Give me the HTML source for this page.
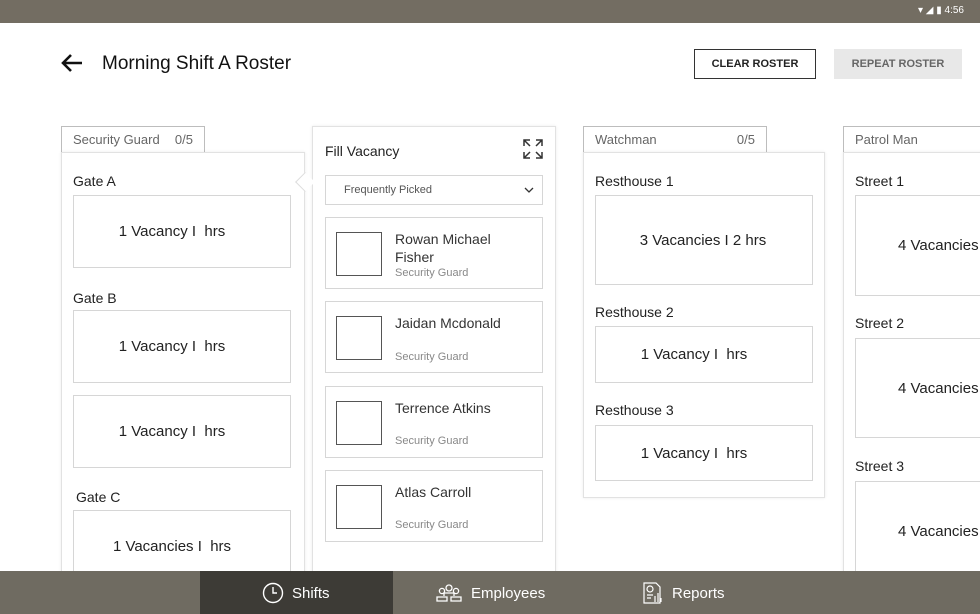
<!DOCTYPE html><html><head><style>
*{box-sizing:border-box;margin:0;padding:0}
body{width:980px;height:614px;overflow:hidden;background:#fff;font-family:"Liberation Sans",sans-serif;color:#222;position:relative}
.a{position:absolute}
.box{position:absolute;border:1px solid #d6d6d6;background:#fff;display:flex;align-items:center;justify-content:center;font-size:15px;color:#222;padding-right:20px}
.lbl{position:absolute;font-size:14px;color:#222}
.tab{position:absolute;border:1px solid #bdbdbd;border-bottom:none;background:#fff;font-size:13px;color:#666;padding:5px 11px;height:27px}
.panel{position:absolute;border:1px solid #e2e2e2;background:#fff;box-shadow:0 0 3px rgba(0,0,0,.08)}
.card{position:absolute;left:325px;width:218px;height:72px;border:1px solid #d6d6d6}
.card .av{position:absolute;left:10px;top:14px;width:46px;height:44px;border:1px solid #555}
.card .n{position:absolute;left:69px;top:12px;font-size:14px;color:#333;line-height:18px;width:115px}
.card .r{position:absolute;left:69px;font-size:11px;color:#888}
</style></head><body>
<div class="a" style="left:0;top:0;width:980px;height:23px;background:#736d62"></div>
<div class="a" style="right:16px;top:5px;font-size:10px;color:#fff">▾ ◢ ▮ 4:56</div>
<svg class="a" style="left:60px;top:53px" width="24" height="20"><path d="M22 10H3M11 2L3 10l8 8" stroke="#111" stroke-width="2.6" fill="none"/></svg>
<div class="a" style="left:102px;top:53px;font-size:19px;color:#111">Morning Shift A Roster</div>
<div class="a" style="left:694px;top:49px;width:122px;height:30px;border:1px solid #333;font-size:11px;font-weight:bold;display:flex;align-items:center;justify-content:center;color:#222">CLEAR ROSTER</div>
<div class="a" style="left:834px;top:49px;width:128px;height:30px;background:#e8e8e8;font-size:11px;font-weight:bold;display:flex;align-items:center;justify-content:center;color:#666">REPEAT ROSTER</div>

<div class="tab" style="left:61px;top:126px;width:144px">Security Guard<span style="float:right">0/5</span></div>
<div class="panel" style="left:61px;top:152px;width:244px;height:440px"></div>
<div class="lbl" style="left:73px;top:173px">Gate A</div>
<div class="box" style="left:73px;top:195px;width:218px;height:73px">1 Vacancy I &nbsp;hrs</div>
<div class="lbl" style="left:73px;top:290px">Gate B</div>
<div class="box" style="left:73px;top:310px;width:218px;height:73px">1 Vacancy I &nbsp;hrs</div>
<div class="box" style="left:73px;top:395px;width:218px;height:73px">1 Vacancy I &nbsp;hrs</div>
<div class="lbl" style="left:76px;top:489px">Gate C</div>
<div class="box" style="left:73px;top:510px;width:218px;height:73px">1 Vacancies I &nbsp;hrs</div>

<div class="panel" style="left:312px;top:126px;width:244px;height:460px"></div>
<div class="a" style="left:298px;top:175px;width:14px;height:14px;background:#fff;border-left:1px solid #ddd;border-bottom:1px solid #ddd;transform:rotate(45deg)"></div>
<div class="lbl" style="left:325px;top:143px">Fill Vacancy</div>
<svg class="a" style="left:522px;top:138px" width="22" height="22" fill="none" stroke="#333" stroke-width="1.5"><path d="M2 8V2h6M2 2l6 6M20 8V2h-6M20 2l-6 6M2 14v6h6M2 20l6-6M20 14v6h-6M20 20l-6-6"/></svg>
<div class="a" style="left:325px;top:175px;width:218px;height:30px;border:1px solid #d6d6d6;font-size:11px;color:#555;padding:8px 0 0 18px">Frequently Picked<svg style="position:absolute;right:8px;top:11px" width="10" height="7"><path d="M1 1l4 4 4-4" stroke="#333" fill="none" stroke-width="1.3"/></svg></div>
<div class="card" style="top:217px"><div class="av"></div><div class="n">Rowan Michael Fisher</div><div class="r" style="top:49px">Security Guard</div></div>
<div class="card" style="top:301px"><div class="av"></div><div class="n">Jaidan Mcdonald</div><div class="r" style="top:49px">Security Guard</div></div>
<div class="card" style="top:386px"><div class="av"></div><div class="n">Terrence Atkins</div><div class="r" style="top:48px">Security Guard</div></div>
<div class="card" style="top:470px"><div class="av"></div><div class="n">Atlas Carroll</div><div class="r" style="top:48px">Security Guard</div></div>

<div class="tab" style="left:583px;top:126px;width:184px">Watchman<span style="float:right">0/5</span></div>
<div class="panel" style="left:583px;top:152px;width:242px;height:346px"></div>
<div class="lbl" style="left:595px;top:173px">Resthouse 1</div>
<div class="box" style="left:595px;top:195px;width:218px;height:90px;padding-right:2px">3 Vacancies I 2 hrs</div>
<div class="lbl" style="left:595px;top:304px">Resthouse 2</div>
<div class="box" style="left:595px;top:326px;width:218px;height:57px">1 Vacancy I &nbsp;hrs</div>
<div class="lbl" style="left:595px;top:402px">Resthouse 3</div>
<div class="box" style="left:595px;top:425px;width:218px;height:56px">1 Vacancy I &nbsp;hrs</div>

<div class="tab" style="left:843px;top:126px;width:160px">Patrol Man</div>
<div class="panel" style="left:843px;top:152px;width:160px;height:440px"></div>
<div class="lbl" style="left:855px;top:173px">Street 1</div>
<div class="box" style="left:855px;top:195px;width:160px;height:101px;justify-content:flex-start;padding-left:42px">4 Vacancies</div>
<div class="lbl" style="left:855px;top:315px">Street 2</div>
<div class="box" style="left:855px;top:338px;width:160px;height:100px;justify-content:flex-start;padding-left:42px">4 Vacancies</div>
<div class="lbl" style="left:855px;top:458px">Street 3</div>
<div class="box" style="left:855px;top:481px;width:160px;height:100px;justify-content:flex-start;padding-left:42px">4 Vacancies</div>

<div class="a" style="left:0;top:571px;width:980px;height:43px;background:#6f6b61"></div>
<div class="a" style="left:200px;top:571px;width:193px;height:43px;background:#3d3b36"></div>
<svg class="a" style="left:262px;top:582px" width="22" height="22" fill="none" stroke="#fff" stroke-width="1.4"><circle cx="11" cy="11" r="9.5"/><path d="M11 5v6h4"/></svg>
<div class="a" style="left:292px;top:585px;color:#fff;font-size:15px">Shifts</div>
<svg class="a" style="left:436px;top:584px" width="26" height="18" fill="none" stroke="#fff" stroke-width="1.3"><circle cx="13" cy="4" r="3"/><circle cx="6" cy="7" r="2.6"/><circle cx="20" cy="7" r="2.6"/><path d="M1 17v-4h10v4zM15 17v-4h10v4zM8 12v-3h10v3"/></svg>
<div class="a" style="left:471px;top:585px;color:#fff;font-size:15px">Employees</div>
<svg class="a" style="left:642px;top:582px" width="22" height="22" fill="none" stroke="#fff" stroke-width="1.2"><path d="M2 1h12l4 4v16H2z"/><circle cx="8" cy="7" r="3"/><path d="M5 13h6M5 16h4M13 20v-6M16 20v-9M19 20v-4"/></svg>
<div class="a" style="left:672px;top:585px;color:#fff;font-size:15px">Reports</div>
</body></html>
